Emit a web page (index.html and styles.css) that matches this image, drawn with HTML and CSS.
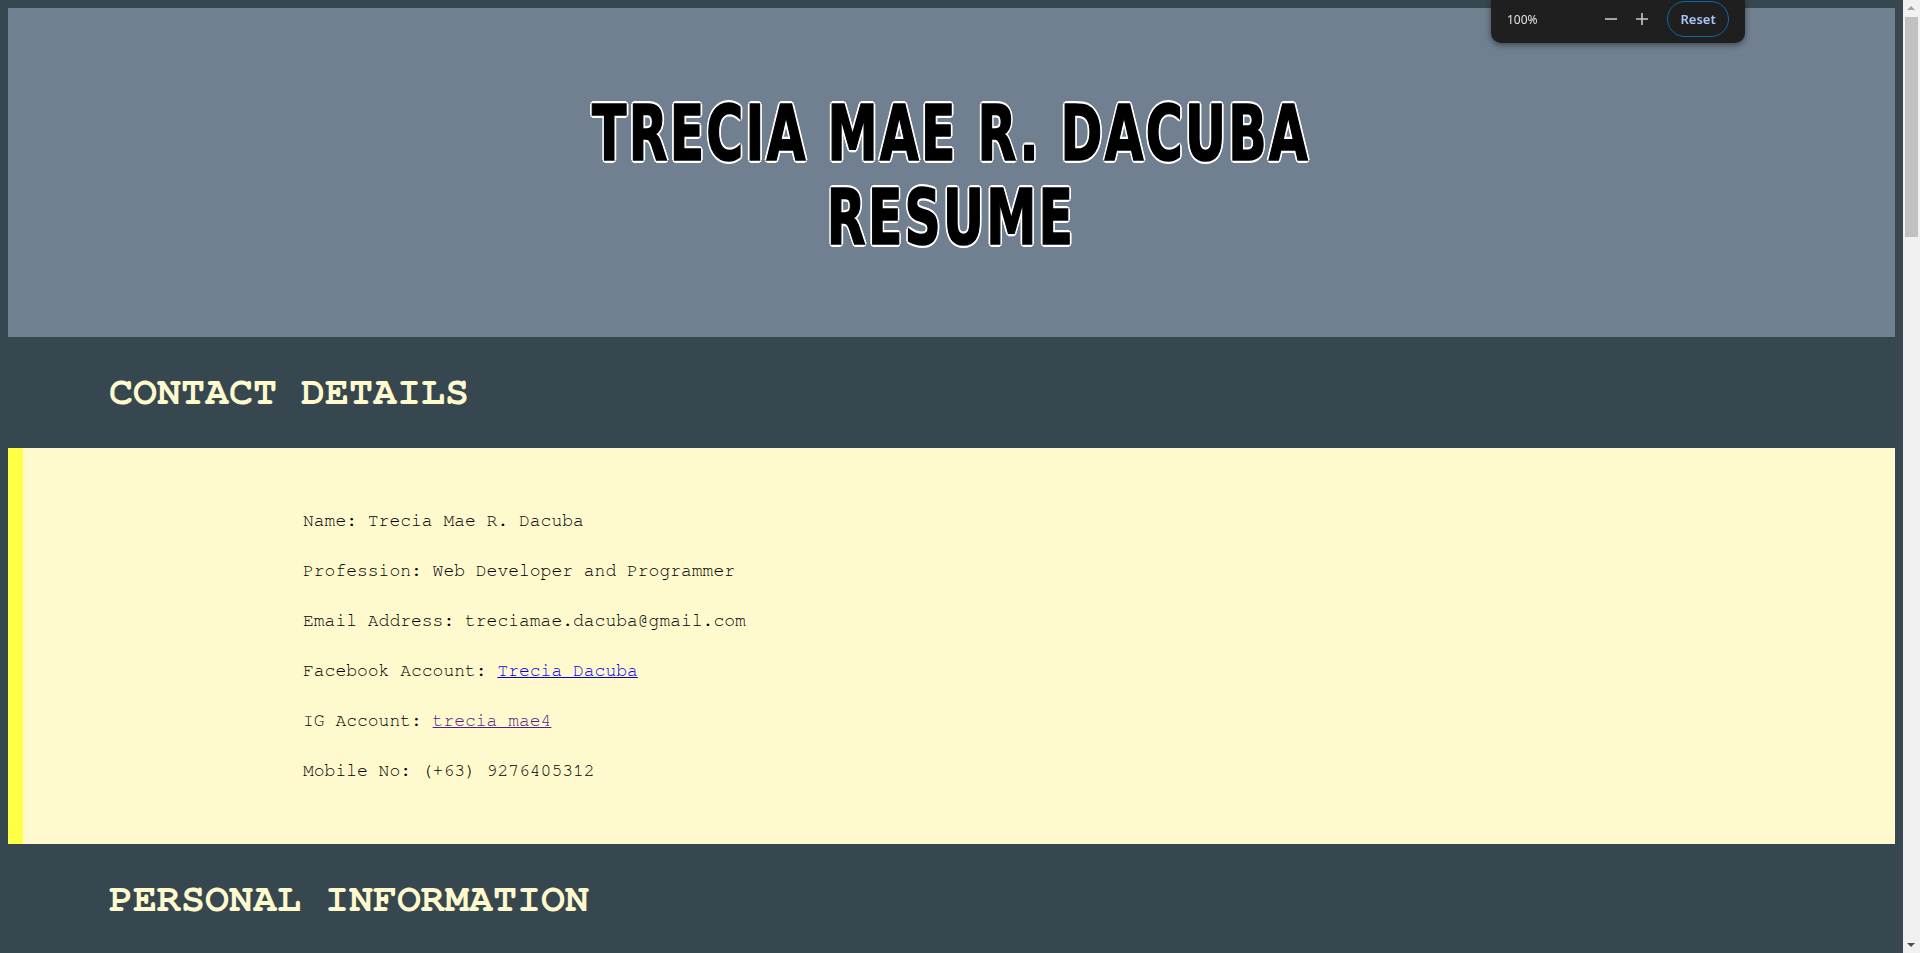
FILE: index.html
```html
<!DOCTYPE html>
<html lang="en">
<head>
<meta charset="utf-8">
<title>Trecia Mae R. Dacuba - Resume</title>
<link rel="stylesheet" href="styles.css">
</head>
<body>
<header class="banner">
  <h1 class="banner-title">TRECIA MAE R. DACUBA<br>RESUME</h1>
</header>

<section class="section">
  <h2 class="section-title">CONTACT DETAILS</h2>
  <div class="card">
    <p class="line">Name: Trecia Mae R. Dacuba</p>
    <p class="line">Profession: Web Developer and Programmer</p>
    <p class="line">Email Address: treciamae.dacuba@gmail.com</p>
    <p class="line">Facebook Account: <a class="link" href="#">Trecia Dacuba</a></p>
    <p class="line">IG Account: <a class="link link-visited" href="#">trecia_mae4</a></p>
    <p class="line">Mobile No: (+63) 9276405312</p>
  </div>
</section>

<section class="section">
  <h2 class="section-title">PERSONAL INFORMATION</h2>
  <div class="card">
    <p class="line">Birthday: May 4, 2001</p>
    <p class="line">Age: 22</p>
    <p class="line">Gender: Female</p>
    <p class="line">Civil Status: Single</p>
    <p class="line">Nationality: Filipino</p>
    <p class="line">Religion: Roman Catholic</p>
  </div>
</section>

<section class="section">
  <h2 class="section-title">EDUCATIONAL BACKGROUND</h2>
  <div class="card">
    <p class="line">Tertiary: Bachelor of Science in Information Technology</p>
    <p class="line">Secondary: Senior High School</p>
    <p class="line">Junior High School</p>
    <p class="line">Primary: Elementary School</p>
    <p class="line">&nbsp;</p>
    <p class="line">&nbsp;</p>
  </div>
</section>

<section class="section">
  <h2 class="section-title">SKILLS</h2>
  <div class="card">
    <p class="line">HTML and CSS</p>
    <p class="line">JavaScript</p>
    <p class="line">Java</p>
    <p class="line">Python</p>
    <p class="line">Database Management (SQL)</p>
    <p class="line">Graphic Design</p>
  </div>
</section>

<section class="section">
  <h2 class="section-title">WORK EXPERIENCE</h2>
  <div class="card">
    <p class="line">Freelance Web Developer</p>
    <p class="line">Student Assistant</p>
    <p class="line">&nbsp;</p>
    <p class="line">&nbsp;</p>
    <p class="line">&nbsp;</p>
    <p class="line">&nbsp;</p>
  </div>
</section>

<section class="section">
  <h2 class="section-title">ACHIEVEMENTS</h2>
  <div class="card">
    <p class="line">Dean's Lister</p>
    <p class="line">With Honors</p>
    <p class="line">&nbsp;</p>
    <p class="line">&nbsp;</p>
    <p class="line">&nbsp;</p>
    <p class="line">&nbsp;</p>
  </div>
</section>

<div class="scrollbar" aria-hidden="true">
  <span class="scroll-arrow scroll-arrow-up"></span>
  <span class="scroll-thumb"></span>
  <span class="scroll-arrow scroll-arrow-down"></span>
</div>

<div class="zoom-bar">
  <span class="zoom-level">100%</span>
  <button class="zoom-btn" type="button" aria-label="Zoom out">
    <svg width="14" height="14" viewBox="0 0 14 14"><path d="M1 7h12" stroke="#c8c8c8" stroke-width="1.6" fill="none"/></svg>
  </button>
  <button class="zoom-btn" type="button" aria-label="Zoom in">
    <svg width="14" height="14" viewBox="0 0 14 14"><path d="M1 7h12M7 1v12" stroke="#c8c8c8" stroke-width="1.6" fill="none"/></svg>
  </button>
  <button class="zoom-reset" type="button">Reset</button>
</div>
</body>
</html>
```

FILE: styles.css
```css
html {
  background: #37474f;
}

body {
  margin: 8px 25px 8px 8px;
  background: #37474f;
  font-family: "Nimbus Mono PS", "Nimbus Mono L", "FreeMono", "Liberation Mono", monospace;
  color: #000;
}

.banner {
  height: 329px;
  background: #708090;
  display: flex;
  align-items: center;
  justify-content: center;
}

.banner-title {
  margin: 6px 0 0;
  text-align: center;
  font-family: "DejaVu Sans Condensed", "DejaVu Sans", sans-serif;
  font-stretch: condensed;
  font-weight: 700;
  font-size: 76px;
  line-height: 84px;
  letter-spacing: 3px;
  color: #000;
  transform: scaleX(0.737);
  -webkit-text-stroke: 1.5px #000;
  text-shadow:
    2px 0 0 #fff, -2px 0 0 #fff, 0 2px 0 #fff, 0 -2px 0 #fff,
    2px 2px 0 #fff, -2px -2px 0 #fff, 2px -2px 0 #fff, -2px 2px 0 #fff,
    3px 0 0 #fff, -3px 0 0 #fff, 0 3px 0 #fff, 0 -3px 0 #fff;
}

.section-title {
  margin: 0;
  padding: 33px 0 33px 101px;
  font-family: "Nimbus Mono PS", "Nimbus Mono L", "FreeMono", "Liberation Mono", monospace;
  font-size: 40px;
  font-weight: 700;
  line-height: 45px;
  color: #fffacd;
}

.card {
  background: #fffacd;
  border-left: 15px solid #ffff44;
  padding: 48px 0 48px 280px;
  display: flex;
  flex-direction: column;
}

.line {
  margin: 0;
  font-size: 18px;
  line-height: 50px;
  color: #000;
}

.link {
  color: #0000ee;
  text-decoration: underline;
}

.link-visited {
  color: #551a8b;
}

.scrollbar {
  position: fixed;
  top: 0;
  right: 0;
  width: 17px;
  height: 100vh;
  background: #f1f1f1;
}

.scroll-thumb {
  position: absolute;
  top: 17px;
  left: 2px;
  width: 13px;
  height: 220px;
  background: #c1c1c1;
}

.scroll-arrow {
  position: absolute;
  left: 4px;
  width: 0;
  height: 0;
  border-left: 4.5px solid transparent;
  border-right: 4.5px solid transparent;
}

.scroll-arrow-up {
  top: 6px;
  border-bottom: 4.5px solid #a3a3a3;
}

.scroll-arrow-down {
  bottom: 6px;
  border-top: 4.5px solid #505050;
}

.zoom-bar {
  position: fixed;
  top: 0;
  right: 175px;
  width: 254px;
  height: 43px;
  box-sizing: border-box;
  padding: 0 16px;
  background: #1f1f1f;
  border-radius: 0 0 10px 10px;
  box-shadow: 0 2px 6px rgba(0, 0, 0, 0.45);
  display: flex;
  align-items: center;
  font-family: "Noto Sans", "Open Sans", sans-serif;
}

.zoom-level {
  font-size: 12px;
  color: #e3e3e3;
  width: 92px;
  margin-top: -4px;
}

.zoom-btn {
  width: 32px;
  height: 24px;
  padding: 0;
  border: 0;
  background: transparent;
  display: flex;
  align-items: center;
  justify-content: center;
  margin-top: -5px;
}

.zoom-reset {
  margin-left: 10px;
  margin-top: -6px;
  width: 64px;
  height: 36px;
  border: 1px solid #0b6aa8;
  border-radius: 18px;
  background: transparent;
  color: #a8c7fa;
  font-family: "Noto Sans", "Open Sans", sans-serif;
  font-size: 13px;
  font-weight: 600;
  padding: 0;
}
```
